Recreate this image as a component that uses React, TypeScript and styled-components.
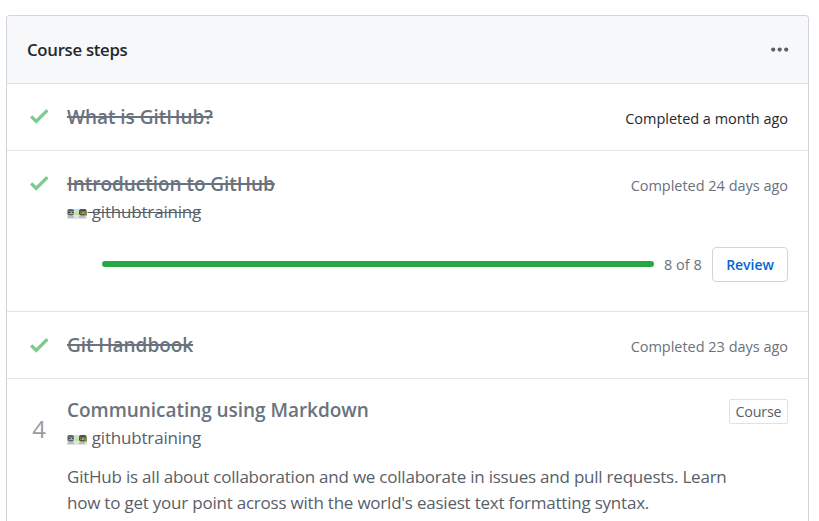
import React from "react";
import styled, { createGlobalStyle } from "styled-components";

const GlobalStyle = createGlobalStyle`
  * { box-sizing: border-box; }
  body {
    margin: 0;
    background: #fff;
    color: #24292e;
    font-family: "Open Sans", "Noto Sans", sans-serif;
  }
`;

const Page = styled.main`
  height: 521px;
  padding: 15px 10px 0 6px;
  overflow: hidden;
`;

const Card = styled.section`
  height: 506px;
  border: 1px solid #d1d5da;
  border-bottom: 0;
  border-radius: 4px 4px 0 0;
  overflow: hidden;
`;

const Header = styled.header`
  display: flex;
  align-items: center;
  justify-content: space-between;
  height: 68px;
  padding: 0 19px 0 20px;
  background: #f6f8fa;
  border-bottom: 1px solid #dfe2e6;
`;

const Heading = styled.h1`
  margin: 0;
  font-size: 16.8px;
  line-height: 26px;
  font-weight: 600;
  letter-spacing: -0.3px;
`;

const Step = styled.article<{ $height: number; $last?: boolean }>`
  display: grid;
  grid-template-columns: 24px minmax(0, 1fr);
  column-gap: 16px;
  height: ${(p) => p.$height}px;
  padding: 0 20px;
  border-bottom: ${(p) => (p.$last ? "0" : "1px solid #e1e4e8")};
`;

const Marker = styled.div<{ $top: number }>`
  display: flex;
  justify-content: center;
  align-items: flex-start;
  padding-top: ${(p) => p.$top}px;
`;

const StepNumber = styled.span`
  font-size: 24px;
  line-height: 30px;
  color: #959da5;
`;

const Body = styled.div<{ $top: number }>`
  padding-top: ${(p) => p.$top}px;
`;

const TitleRow = styled.div`
  display: flex;
  justify-content: space-between;
  height: 28px;
`;

const Title = styled.h2<{ $done?: boolean }>`
  margin: 0;
  font-size: 19px;
  line-height: 28px;
  font-weight: 600;
  letter-spacing: -0.04px;
  white-space: nowrap;
  color: #6a737d;
  text-decoration: ${(p) => (p.$done ? "line-through" : "none")};
  text-decoration-thickness: 2px;
`;

const Status = styled.span<{ $dark?: boolean }>`
  padding-top: 4px;
  font-size: 14.5px;
  line-height: 24px;
  letter-spacing: -0.02px;
  white-space: nowrap;
  color: ${(p) => (p.$dark ? "#24292e" : "#6a737d")};
`;

const Author = styled.div<{ $done?: boolean }>`
  display: flex;
  align-items: center;
  height: 28px;
  font-size: 17px;
  line-height: 28px;
  letter-spacing: -0.18px;
  color: #586069;
  white-space: pre;
  text-decoration: ${(p) => (p.$done ? "line-through" : "none")};
  text-decoration-thickness: 1px;

  svg { margin-top: 3px; }
`;

const AuthorName = styled.span`
  padding-left: 0.5px;
`;

const ProgressRow = styled.div`
  display: flex;
  align-items: center;
  height: 35px;
  margin: 21px 0 0 35px;
`;

const Track = styled.div`
  flex: 1;
  height: 6px;
  margin-bottom: 1px;
  border-radius: 3px;
  background: #28a745;
`;

const Count = styled.span`
  width: 58px;
  padding-left: 10px;
  font-size: 14.5px;
  line-height: 24px;
  color: #6a737d;
  white-space: nowrap;
`;

const ReviewButton = styled.button`
  width: 76px;
  height: 35px;
  padding: 0;
  border: 1px solid #d1d5da;
  border-radius: 4px;
  background: #fff;
  color: #0366d6;
  font: 600 14px/24px "Open Sans", sans-serif;
  letter-spacing: -0.05px;
`;

const Label = styled.span`
  width: 59px;
  height: 25px;
  margin-top: 3px;
  border: 1px solid #dfe2e5;
  border-radius: 2px;
  font-size: 14.3px;
  line-height: 23px;
  letter-spacing: -0.2px;
  text-align: center;
  color: #586069;
`;

const Description = styled.p`
  margin: 12px 0 0;
  font-size: 17px;
  line-height: 26px;
  letter-spacing: -0.22px;
  white-space: nowrap;
  color: #586069;
`;

const CheckIcon = () => (
  <svg width="18.6" height="14.8" viewBox="0 3.5 12 9.5" fill="#7eca8f">
    <path d="M12 5l-8 8-4-4 1.5-1.5L4 10l6.5-6.5L12 5z" />
  </svg>
);

const MoreIcon = () => (
  <svg width="18" height="6" viewBox="0 0 18 6" fill="#586069">
    <circle cx="2.2" cy="2.6" r="2.1" />
    <circle cx="8.7" cy="2.6" r="2.1" />
    <circle cx="15.2" cy="2.6" r="2.1" />
  </svg>
);

const Avatar = () => (
  <svg width="20" height="11" viewBox="0 0 20 11">
    <rect y="1" width="20" height="10" fill="#dfe4e2" />
    <rect x="7" y="1" width="5" height="5" fill="#b9e7ef" />
    <rect x="8" y="4" width="4" height="3" fill="#c5e48e" />
    <rect x="0.5" y="1" width="6.5" height="6.5" rx="2" fill="#5a6467" />
    <rect x="2" y="3.5" width="4.5" height="2.5" fill="#bfa491" />
    <rect x="2" y="4" width="1.5" height="1" fill="#333" />
    <rect x="5" y="4" width="1" height="1" fill="#333" />
    <rect x="1" y="8" width="6" height="2" fill="#b8bdbe" />
    <rect x="12" y="1" width="7.5" height="6.5" rx="2" fill="#4c5632" />
    <rect x="13.5" y="3.5" width="4" height="2.5" fill="#b99882" />
    <rect x="14" y="4" width="1" height="1" fill="#333" />
    <rect x="17.5" y="3.5" width="2.5" height="4" fill="#779447" />
    <rect x="12" y="8" width="6" height="2" fill="#b9beb9" />
  </svg>
);

const authorName = " githubtraining";

export default function App() {
  return (
    <>
      <GlobalStyle />
      <Page>
        <Card>
          <Header>
            <Heading>Course steps</Heading>
            <MoreIcon />
          </Header>
          <Step $height={67}>
            <Marker $top={25}><CheckIcon /></Marker>
            <Body $top={19}>
              <TitleRow>
                <Title $done>What is GitHub?</Title>
                <Status $dark>Completed a month ago</Status>
              </TitleRow>
            </Body>
          </Step>
          <Step $height={161}>
            <Marker $top={25}><CheckIcon /></Marker>
            <Body $top={19}>
              <TitleRow>
                <Title $done>Introduction to GitHub</Title>
                <Status>Completed 24 days ago</Status>
              </TitleRow>
              <Author $done><Avatar /><AuthorName>{authorName}</AuthorName></Author>
              <ProgressRow>
                <Track />
                <Count>8 of 8</Count>
                <ReviewButton>Review</ReviewButton>
              </ProgressRow>
            </Body>
          </Step>
          <Step $height={67}>
            <Marker $top={26}><CheckIcon /></Marker>
            <Body $top={19}>
              <TitleRow>
                <Title $done>Git Handbook</Title>
                <Status>Completed 23 days ago</Status>
              </TitleRow>
            </Body>
          </Step>
          <Step $height={142} $last>
            <Marker $top={35}><StepNumber>4</StepNumber></Marker>
            <Body $top={17}>
              <TitleRow>
                <Title>Communicating using Markdown</Title>
                <Label>Course</Label>
              </TitleRow>
              <Author><Avatar /><AuthorName>{authorName}</AuthorName></Author>
              <Description>
                GitHub is all about collaboration and we collaborate in issues and pull requests. Learn
                <br />
                how to get your point across with the world's easiest text formatting syntax.
              </Description>
            </Body>
          </Step>
        </Card>
      </Page>
    </>
  );
}
